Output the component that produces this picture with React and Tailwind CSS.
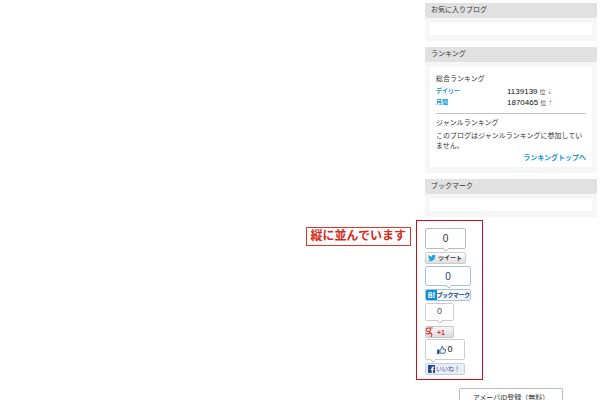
import React from "react";

function Panel({ title, children }) {
  return (
    <section className="bg-[#f6f6f6]">
      <h2 className="h-[15px] bg-[#e1e1e1] px-1.5 text-[7px] leading-[14px] text-[#333]">{title}</h2>
      <div className="px-[5px] pt-[5px] pb-1.5">
        <div className="min-h-3 bg-white">{children}</div>
      </div>
    </section>
  );
}

function RankRow({ label, value, arrow, arrowClass }) {
  return (
    <tr>
      <th scope="row" className="w-[71px] p-0 text-left text-[6px] leading-[11px] font-bold text-[#0b93d2]">
        {label}
      </th>
      <td className="p-0">
        <div className="flex h-[11px] items-center gap-0.5 text-[8px] leading-none text-[#111]">
          {value}
          <span className="text-[6px] text-[#555]">位</span>
          <span className={arrowClass}>{arrow}</span>
        </div>
      </td>
    </tr>
  );
}

function Bubble({ children, className, tail, tailClass }) {
  return (
    <div className={"relative flex items-center justify-center rounded-[2px] border bg-white " + className}>
      {children}
      <svg
        className={"absolute top-full h-1 w-1.5 " + tailClass}
        viewBox="0 0 6 4"
        fill="none"
        overflow="visible"
        aria-hidden="true"
      >
        <path d="M0 -1H6V0L3 3L0 0Z" fill="#fff" />
        <path d="M0 0L3 3L6 0" stroke={tail} strokeWidth="1" />
      </svg>
    </div>
  );
}

function TwitterBird() {
  return (
    <svg viewBox="0 0 24 24" className="h-2 w-2 shrink-0" fill="#1ba4e0" aria-hidden="true">
      <path d="M24 4.6a10 10 0 0 1-2.8.8 5 5 0 0 0 2.1-2.7 10 10 0 0 1-3.1 1.2 4.9 4.9 0 0 0-8.4 4.5A14 14 0 0 1 1.7 3.1a4.9 4.9 0 0 0 1.5 6.6 4.9 4.9 0 0 1-2.2-.6 4.9 4.9 0 0 0 3.9 4.9 5 5 0 0 1-2.2.1 4.9 4.9 0 0 0 4.6 3.4A9.9 9.9 0 0 1 0 19.5 14 14 0 0 0 21.5 7.1 10 10 0 0 0 24 4.6z" />
    </svg>
  );
}

function HatenaMark() {
  return (
    <svg viewBox="0 0 11 10" className="h-2.5 w-[11px] shrink-0" aria-hidden="true">
      <rect width="11" height="10" fill="#0a94d6" />
      <path
        d="M3 2.5H4.6C6.1 2.5 6.1 4.9 4.6 4.9H3M4.6 4.9C6.5 4.9 6.5 7.5 4.6 7.5H3V2.5"
        fill="none"
        stroke="#fff"
        strokeWidth="1.2"
      />
      <path d="M7.3 2H8.7V5.8H7.3ZM7.3 6.6H8.7V8H7.3Z" fill="#fff" />
    </svg>
  );
}

function GoogleMark() {
  return (
    <svg viewBox="0 0 7 10" className="h-2.5 w-[7px] shrink-0" fill="none" stroke="#dc3a2c" aria-hidden="true">
      <path d="M6.8 1H2.5C.6 1 0 2 .2 3.1C.5 4.7 3.3 5.1 4.2 3.5C4.6 2.5 4.3 1.5 3.5 1" strokeWidth="1.1" />
      <path d="M3.2 4.6L5.2 6.4C6.3 7.6 5.6 9.6 4.6 10M0 7C1.5 6.2 3 6.3 4.6 6.4" strokeWidth="1.1" />
    </svg>
  );
}

function ThumbUp() {
  return (
    <svg viewBox="0 0 18 16" className="h-2 w-[9px] shrink-0" aria-hidden="true">
      <path d="M0 7H5V16H0Z" fill="#2a5a9c" />
      <path
        d="M6 8L9.5 4.5V1H11.5C12.8 2.5 12.5 4.5 11.5 6.5H16.5L17 8L15.5 14.5H8L6 13.5Z"
        fill="#fff"
        stroke="#2a5a9c"
        strokeWidth="1.8"
      />
    </svg>
  );
}

function FacebookMark() {
  return (
    <svg viewBox="0 0 7 8" className="h-2 w-[7px] shrink-0" aria-hidden="true">
      <rect width="7" height="8" fill="#2c4a8c" />
      <path d="M6.2 2H5.5C4.6 2 4.3 2.4 4.3 3.2V8M2.9 4.4H6" fill="none" stroke="#fff" strokeWidth="1.2" />
    </svg>
  );
}

export default function App() {
  return (
    <main className="flex h-screen items-start justify-end overflow-hidden bg-white pr-[3px] font-['Liberation_Sans','Noto_Sans_CJK_JP',sans-serif]">
      <p className="mt-[227px] mr-[5px] h-[19px] border border-[#d8372b] px-1 text-[12px] leading-[17px] font-bold whitespace-nowrap text-[#d62a1c]">
        縦に並んでいます
      </p>

      <aside className="w-[181px] shrink-0 pt-[3px]">
        <div className="flex flex-col gap-1.5 pl-[9px]">
          <Panel title="お気に入りブログ" />
          <Panel title="ランキング">
            <div className="px-1.5 pt-1 pb-0.5 text-[7px] text-[#333]">
              <h3 className="leading-[15px]">総合ランキング</h3>
              <table className="w-full border-collapse">
                <tbody>
                  <RankRow label="デイリー" value="1139139" arrow="↓" arrowClass="text-[#444]" />
                  <RankRow label="月間" value="1870465" arrow="↑" arrowClass="text-[#f0417c]" />
                </tbody>
              </table>
              <hr className="mt-[5px] mb-[3px] border-[#c4c4c4]" />
              <h3 className="leading-3">ジャンルランキング</h3>
              <p className="mt-0.5 leading-[10px]">このブログはジャンルランキングに参加していません。</p>
              <p className="text-right leading-[14px]">
                <a href="#ranking" className="font-bold text-[#0b93d2]">
                  ランキングトップへ
                </a>
              </p>
            </div>
          </Panel>
          <Panel title="ブックマーク" />
        </div>

        <div className="mt-[3px] flex h-40 w-[67px] flex-col items-start border border-[#d0111b] px-2 pt-[7px]">
          <Bubble className="h-[21px] w-[41px] border-[#bbb] text-[10px] text-[#333]" tail="#bbb" tailClass="left-[17px]">
            0
          </Bubble>
          <button className="mt-[3px] flex h-3 w-[41px] items-center gap-0.5 rounded-[2px] border border-[#ccc] bg-linear-to-b from-white to-[#dedede] px-0.5 text-[6px] leading-none font-bold whitespace-nowrap text-[#333]">
            <TwitterBird />
            ツイート
          </button>

          <Bubble className="mt-0.5 h-5 w-[46px] border-[#a4c0de] text-[10px] text-[#17427c]" tail="#a4c0de" tailClass="left-5">
            0
          </Bubble>
          <button className="mt-[3px] flex h-3 w-[46px] items-center overflow-hidden rounded-[2px] border border-[#a4c0de] bg-linear-to-b from-white to-[#edf3fa] text-[6px] leading-none font-bold whitespace-nowrap text-[#17427c] [font-feature-settings:'palt']">
            <HatenaMark />
            ブックマーク
          </button>

          <Bubble className="mt-0.5 h-[18px] w-[29px] border-[#ccc] text-[9px] text-[#555]" tail="#bbb" tailClass="left-[11px]">
            0
          </Bubble>
          <button className="mt-[5px] flex h-3 w-[29px] items-center gap-1 rounded-[2px] border border-[#c8c8c8] bg-linear-to-b from-[#f6f6f6] to-[#dcdcdc] text-[7px] leading-none font-bold text-[#dc2f24]">
            <GoogleMark />
            +1
          </button>

          <Bubble className="mt-px h-[21px] w-10 gap-px border-[#ccc] text-[9px] text-[#222]" tail="#bbb" tailClass="left-1">
            <ThumbUp />
            0
          </Bubble>
          <button className="mt-[3px] flex h-3 w-10 items-center gap-px rounded-[2px] border border-[#c6d0e4] bg-[#e9edf5] px-0.5 text-[6px] leading-none whitespace-nowrap text-[#3b5998]">
            <FacebookMark />
            いいね！
          </button>
        </div>

        <button className="mt-2 ml-[43px] block h-5 w-[104px] rounded-[2px] border border-[#bbb] bg-white text-[7px] leading-[18px] whitespace-nowrap text-[#333]">
          アメーバID登録（無料）
        </button>
      </aside>
    </main>
  );
}
